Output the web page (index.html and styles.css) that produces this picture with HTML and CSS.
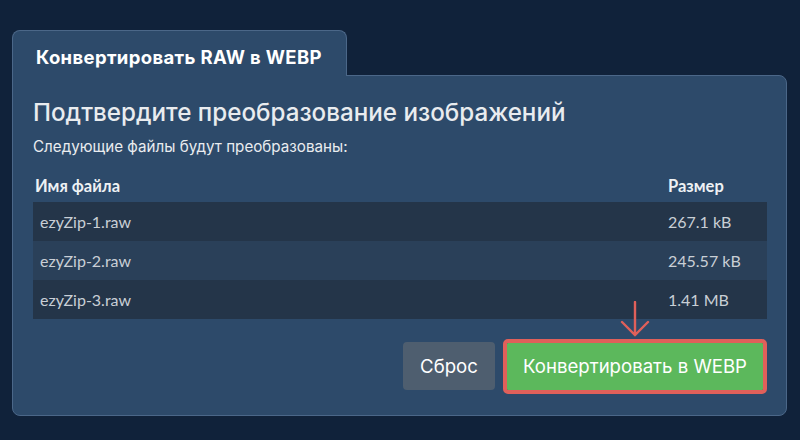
FILE: index.html
```html
<!DOCTYPE html>
<html lang="ru">
<head>
<meta charset="utf-8">
<link rel="stylesheet" href="styles.css">
</head>
<body>
<div class="wrap">
  <div class="tab">Конвертировать RAW в WEBP</div>
  <div class="panel">
    <h1 class="title">Подтвердите преобразование изображений</h1>
    <p class="sub">Следующие файлы будут преобразованы:</p>
    <div class="table">
      <div class="row head"><div class="c-name">Имя файла</div><div class="c-size">Размер</div></div>
      <div class="row dark"><div class="c-name">ezyZip-1.raw</div><div class="c-size">267.1 kB</div></div>
      <div class="row light"><div class="c-name">ezyZip-2.raw</div><div class="c-size">245.57 kB</div></div>
      <div class="row dark"><div class="c-name">ezyZip-3.raw</div><div class="c-size">1.41 MB</div></div>
    </div>
    <div class="actions">
      <button class="btn reset">Сброс</button>
      <div class="convert-wrap">
        <svg class="arrow" width="30" height="36" viewBox="0 0 30 36"><path d="M15 1 V34 M2 21 L15 34 L28 21" fill="none" stroke="#e0605a" stroke-width="2.4" stroke-linecap="round" stroke-linejoin="miter"/></svg>
        <button class="btn convert">Конвертировать в WEBP</button>
      </div>
    </div>
  </div>
</div>
</body>
</html>
```

FILE: styles.css
```css
html, body {
  margin: 0;
  padding: 0;
  background: #10223a;
  width: 800px;
  height: 440px;
  overflow: hidden;
}
.wrap {
  padding: 30px 0 0 12px;
  width: 775px;
  font-family: Inter, "Noto Sans", sans-serif;
}
.tab {
  position: relative;
  z-index: 1;
  box-sizing: border-box;
  width: 335px;
  height: 46px;
  margin-bottom: -1px;
  padding: 14px 0 0 23px;
  background: #2d4a6a;
  border: 1px solid #4b6788;
  border-bottom: none;
  border-radius: 8px 8px 0 0;
  color: #ffffff;
  font-weight: 700;
  font-size: 18.5px;
  letter-spacing: 0.35px;
  line-height: 24px;
}
.panel {
  box-sizing: border-box;
  height: 341px;
  background: #2d4a6a;
  border: 1px solid #4b6788;
  border-radius: 0 8px 8px 8px;
  padding: 22px 19px 0 20px;
}
.title {
  margin: 0;
  font-size: 24.2px;
  font-weight: 500;
  line-height: 30px;
  color: #e9ecef;
  letter-spacing: 0;
}
.sub {
  margin: 9px 0 0 0;
  font-size: 15.2px;
  line-height: 20px;
  color: #e9ecef;
}
.table {
  margin-top: 19px;
  font-family: Lato, "Noto Sans", sans-serif;
  font-size: 16px;
}
.row {
  display: grid;
  grid-template-columns: 1fr 99px;
  height: 39px;
  align-items: center;
  color: #c9cfd6;
}
.row .c-name { padding-left: 7px; }
.head {
  height: 26px;
  font-weight: 700;
  color: #eef1f4;
  align-items: start;
  font-size: 16.5px;
}
.head .c-name { padding-left: 2px; }
.dark { background: #243549; }
.light { background: #2a4059; }
.actions {
  display: flex;
  justify-content: flex-end;
  align-items: center;
  margin-top: 23px;
}
.btn {
  border: none;
  height: 48px;
  border-radius: 4px;
  font-family: Inter, "Noto Sans", sans-serif;
  font-size: 18.6px;
  color: #ffffff;
  padding: 0;
}
.reset {
  width: 92px;
  background: #4e5e6f;
}
.convert-wrap {
  position: relative;
  margin-left: 12px;
  margin-right: 4px;
}
.convert {
  display: block;
  width: 256px;
  height: 47px;
  background: #5cb85c;
  outline: 4px solid #e0605a;
  border-radius: 1px;
}
.arrow {
  position: absolute;
  left: 113px;
  top: -42px;
}
```
